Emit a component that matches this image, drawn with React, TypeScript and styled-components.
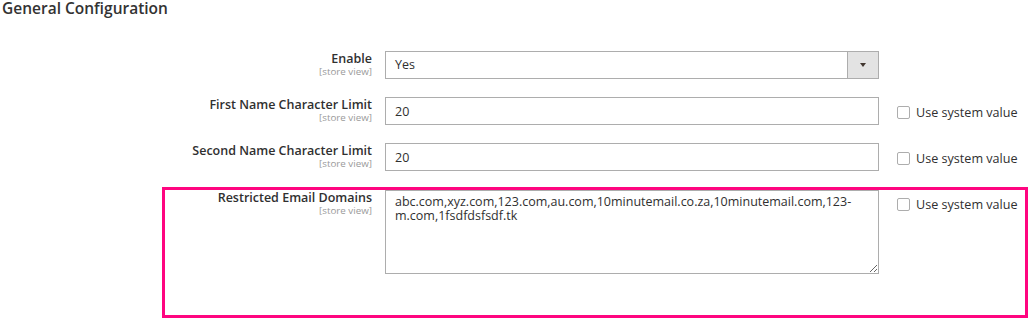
import * as React from 'react'
import styled, { createGlobalStyle } from 'styled-components'

const GlobalStyle = createGlobalStyle`
  html, body {
    margin: 0;
    padding: 0;
    background: #fff;
  }
  body {
    font-family: "Open Sans", "Liberation Sans", sans-serif;
    color: #303030;
  }
`

const Page = styled.div`
  width: 1032px;
  height: 322px;
  overflow: hidden;
`

const Title = styled.h2`
  margin: 0 0 0 2px;
  font-size: 15.5px;
  line-height: 16px;
  font-weight: 600;
  color: #333;
`

const Form = styled.div`
  display: flex;
  flex-direction: column;
  gap: 18px;
  margin-top: 35px;
`

const Row = styled.div<{ $labelWidth: number; $highlight?: boolean }>`
  display: grid;
  grid-template-columns: ${p => p.$labelWidth}px 494px auto;
  align-items: start;
  ${p => p.$highlight && `
    margin: -2px 0 0 162px;
    width: 866px;
    box-sizing: border-box;
    border: 3px solid #ff0580;
    padding-bottom: 41px;
  `}
`

const LabelCell = styled.div`
  text-align: right;
  padding-right: 13px;
`

const LabelText = styled.div`
  font-size: 12.5px;
  line-height: 16px;
  font-weight: 600;
  color: #303030;
`

const Scope = styled.div`
  font-size: 9.8px;
  line-height: 10px;
  color: #9a9a9a;
`

const SelectBox = styled.div`
  display: flex;
  height: 28px;
  box-sizing: border-box;
  border: 1px solid #adadad;
  background: #fff;
`

const SelectValue = styled.div`
  flex: 1;
  padding: 0 9px;
  font-size: 12.5px;
  line-height: 26px;
  color: #303030;
`

const SelectArrow = styled.div`
  width: 30px;
  display: flex;
  align-items: center;
  justify-content: center;
  border-left: 1px solid #adadad;
  background: #e3e3e3;

  &::after {
    content: '';
    border-left: 3.5px solid transparent;
    border-right: 3.5px solid transparent;
    border-top: 4px solid #41362f;
  }
`

const TextInput = styled.input`
  width: 100%;
  height: 28px;
  box-sizing: border-box;
  margin: 0;
  padding: 0 9px;
  border: 1px solid #adadad;
  font-family: inherit;
  font-size: 12.5px;
  color: #303030;
  outline: none;
`

const TextArea = styled.textarea`
  display: block;
  width: 100%;
  height: 84px;
  box-sizing: border-box;
  margin: 0;
  padding: 4px 9px;
  border: 1px solid #adadad;
  font-family: inherit;
  font-size: 12.5px;
  line-height: 14px;
  color: #303030;
  resize: vertical;
  outline: none;
`

const SystemValue = styled.label<{ $offset: number }>`
  display: flex;
  align-items: center;
  gap: 6px;
  margin: ${p => p.$offset}px 0 0 18px;
  font-size: 12.6px;
  line-height: 15px;
  color: #303030;
  white-space: nowrap;
`

const Checkbox = styled.input`
  appearance: none;
  width: 13px;
  height: 13px;
  margin: 0;
  box-sizing: border-box;
  border: 1px solid #adadad;
  border-radius: 2px;
  background: #fff;
`

const domains = 'abc.com,xyz.com,123.com,au.com,10minutemail.co.za,10minutemail.com,123-m.com,1fsdfdsfsdf.tk'

function Label({ text }: { text: string }) {
  return (
    <LabelCell>
      <LabelText>{ text }</LabelText>
      <Scope>[store view]</Scope>
    </LabelCell>
  )
}

function UseSystem({ offset }: { offset: number }) {
  return (
    <SystemValue $offset={ offset }>
      <Checkbox type="checkbox" />
      Use system value
    </SystemValue>
  )
}

export default function App() {
  return (
    <Page>
      <GlobalStyle />
      <Title>General Configuration</Title>
      <Form>
        <Row $labelWidth={ 385 }>
          <Label text="Enable" />
          <SelectBox>
            <SelectValue>Yes</SelectValue>
            <SelectArrow />
          </SelectBox>
        </Row>
        <Row $labelWidth={ 385 }>
          <Label text="First Name Character Limit" />
          <TextInput defaultValue="20" />
          <UseSystem offset={ 8 } />
        </Row>
        <Row $labelWidth={ 385 }>
          <Label text="Second Name Character Limit" />
          <TextInput defaultValue="20" />
          <UseSystem offset={ 8 } />
        </Row>
        <Row $labelWidth={ 220 } $highlight>
          <Label text="Restricted Email Domains" />
          <TextArea defaultValue={ domains } />
          <UseSystem offset={ 7 } />
        </Row>
      </Form>
    </Page>
  )
}
